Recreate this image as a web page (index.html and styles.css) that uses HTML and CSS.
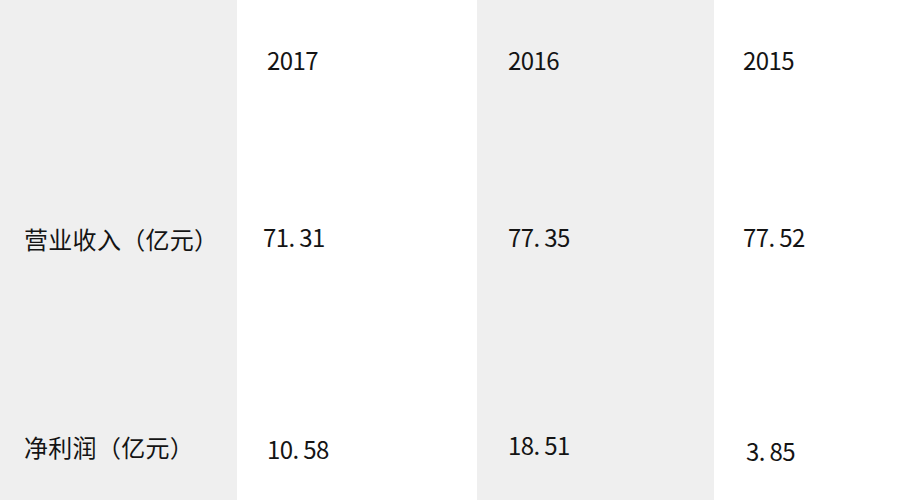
FILE: index.html
```html
<!DOCTYPE html>
<html lang="zh">
<head>
<meta charset="utf-8">
<link rel="stylesheet" href="styles.css">
</head>
<body>
<div class="table">
  <div class="cell c1 r1"></div>
  <div class="cell c1 r2 lbl1">营业收入（亿元）</div>
  <div class="cell c1 r3 lbl2">净利润（亿元）</div>

  <div class="cell c2 r1 yr num">2017</div>
  <div class="cell c2 r2 n1 num v7131">71. 31</div>
  <div class="cell c2 r3 num v1058">10. 58</div>

  <div class="cell c3 r1 yr num">2016</div>
  <div class="cell c3 r2 n1 num">77. 35</div>
  <div class="cell c3 r3 num v1851">18. 51</div>

  <div class="cell c4 r1 yr num">2015</div>
  <div class="cell c4 r2 n1 num">77. 52</div>
  <div class="cell c4 r3 num v385">3. 85</div>
</div>
</body>
</html>
```
FILE: styles.css
```css
html, body {
  margin: 0;
  padding: 0;
  background: #ffffff;
}
.table {
  width: 900px;
  height: 500px;
  display: grid;
  grid-template-columns: 237px 240px 237px 186px;
  grid-template-rows: 150px 200px 150px;
  grid-auto-flow: column;
  font-family: "Noto Sans CJK SC", "Noto Sans", sans-serif;
  font-size: 24px;
  font-weight: 400;
  line-height: 24px;
  color: #141414;
}
.cell {
  box-sizing: border-box;
  white-space: nowrap;
}
.num { letter-spacing: -0.6px; }
.c1, .c3 { background: #efefef; }
.c2, .c4 { background: #ffffff; }
.c1 { padding-left: 24px; }
.c2 { padding-left: 30px; }
.c3 { padding-left: 31px; }
.c4 { padding-left: 29px; }
.yr { padding-top: 48px; }
.lbl1 { padding-top: 77px; letter-spacing: 0.3px; }
.n1 { padding-top: 75px; }
.v7131 { padding-left: 26px; }
.lbl2 { padding-top: 85px; letter-spacing: 0.3px; }
.v1058 { padding-top: 87px; }
.v1851 { padding-top: 83px; }
.v385 { padding-top: 89px; padding-left: 32px; }
```
